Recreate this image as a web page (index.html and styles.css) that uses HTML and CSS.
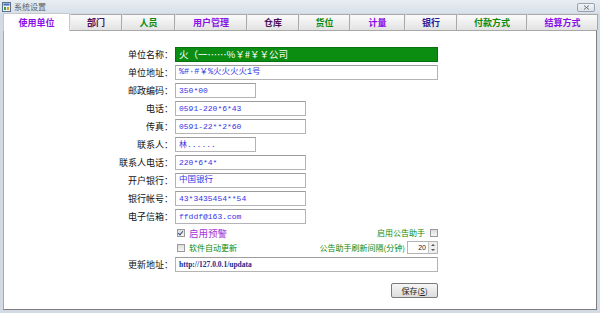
FILE: index.html
```html
<!DOCTYPE html>
<html lang="zh-CN">
<head>
    <meta charset="UTF-8">
    <title>系统设置</title>
    <link rel="stylesheet" href="styles.css">
</head>
<body>
    <div class="window">
        <div class="titlebar">
            <svg class="app-icon" width="9" height="10" viewBox="0 0 9 10">
                <rect x="0.5" y="0.5" width="8" height="9" fill="#e8eef6" stroke="#5a6f8a"></rect>
                <rect x="1.5" y="1.5" width="6" height="2" fill="#3d6fb8"></rect>
                <rect x="2" y="5" width="2" height="3" fill="#3a9a3a"></rect>
                <rect x="5" y="5" width="2" height="3" fill="#d0a030"></rect>
            </svg>
            <span class="title">系统设置</span>
            <span class="close">
                <svg width="7" height="5" viewBox="0 0 7 5">
                    <path d="M1 0.5 L6 4.5 M6 0.5 L1 4.5" stroke="#6a7280" stroke-width="1"></path>
                </svg>
            </span>
        </div>

        <div class="tabs">
            <div class="tab active purple">使用单位</div>
            <div class="tab plum">部门</div>
            <div class="tab green">人员</div>
            <div class="tab purple">用户管理</div>
            <div class="tab plum">仓库</div>
            <div class="tab green">货位</div>
            <div class="tab purple">计量</div>
            <div class="tab navy">银行</div>
            <div class="tab green">付款方式</div>
            <div class="tab purple">结算方式</div>
        </div>

        <div class="panel">
            <div class="form">
                <div class="lbl">单位名称：</div>
                <div class="field"><div class="input wide filled">火（一……%￥#￥￥公司</div></div>

                <div class="lbl">单位地址：</div>
                <div class="field"><div class="input wide cjk">%#·#￥%火火火火1号</div></div>

                <div class="lbl">邮政编码：</div>
                <div class="field"><div class="input short">350*00</div></div>

                <div class="lbl">电话：</div>
                <div class="field"><div class="input mid">0591-220*6*43</div></div>

                <div class="lbl">传真：</div>
                <div class="field"><div class="input mid">0591-22**2*60</div></div>

                <div class="lbl">联系人：</div>
                <div class="field"><div class="input short">林......</div></div>

                <div class="lbl">联系人电话：</div>
                <div class="field"><div class="input mid">220*6*4*</div></div>

                <div class="lbl">开户银行：</div>
                <div class="field"><div class="input mid cjk">中国银行</div></div>

                <div class="lbl">银行帐号：</div>
                <div class="field"><div class="input mid">43*3435454**54</div></div>

                <div class="lbl">电子信箱：</div>
                <div class="field"><div class="input mid">ffddf@163.com</div></div>

                <div class="lbl"></div>
                <div class="field check-row">
                    <label class="check warn"><span class="box checked"></span>启用预警</label>
                    <label class="check right">启用公告助手<span class="box"></span></label>
                </div>

                <div class="lbl"></div>
                <div class="field check-row tall">
                    <label class="check"><span class="box"></span>软件自动更新</label>
                    <div class="check right">公告助手刷新间隔(分钟)
                        <div class="spinner">
                            <span class="num">20</span>
                            <span class="arrows"><span class="up"></span><span class="down"></span></span>
                        </div>
                    </div>
                </div>

                <div class="lbl">更新地址：</div>
                <div class="field"><div class="input wide url">http://127.0.0.1/updata</div></div>

                <div class="lbl"></div>
                <div class="field actions"><button class="btn">保存(<u>S</u>)</button></div>
            </div>
        </div>
    </div>
</body>
</html>
```

FILE: styles.css
```css
body {
    margin: 0;
    width: 600px;
    height: 313px;
    overflow: hidden;
    background: #d3dae3;
    font-family: "Noto Sans CJK SC", "Liberation Sans", sans-serif;
}
.window {
    display: flex;
    flex-direction: column;
    height: 313px;
}
.titlebar {
    display: flex;
    align-items: center;
    height: 13px;
    padding: 0 3px 0 2px;
    background: linear-gradient(#e8edf3, #d8e0ea);
}
.app-icon {
    margin-right: 3px;
}
.title {
    font-size: 8px;
    color: #5b5f66;
    line-height: 13px;
}
.close {
    display: flex;
    align-items: center;
    justify-content: center;
    width: 16px;
    height: 7px;
    margin-left: auto;
    margin-right: 2px;
    margin-top: 2px;
    border: 1px solid #9aa3ae;
    border-radius: 2px;
    background: linear-gradient(#f2f4f7, #dde2e8);
}
.tabs {
    display: grid;
    grid-template-columns: 67px 52px 53px 72px 52px 51px 55px 52px 70px 71px;
    height: 17px;
    margin: 0 2px 0 3px;
    position: relative;
    z-index: 1;
}
.tab {
    display: flex;
    align-items: center;
    justify-content: center;
    font-size: 9px;
    font-weight: bold;
    background: linear-gradient(#fbfbfb, #e2e2e2);
    border: 1px solid #a9a9a9;
    border-left-color: #ededed;
    border-bottom: none;
    margin-top: 1px;
}
.tab.active {
    background: #fff;
    border-color: #c8c8c8;
    margin-top: 0;
    margin-bottom: -1px;
}
.purple { color: #8a10e8; }
.plum { color: #4a0f5e; }
.green { color: #0a8a0a; }
.navy { color: #2a1a9a; }
.panel {
    flex: 1;
    margin: 0 3px 3px 3px;
    background: #fff;
    border: 1px solid #a8a8a8;
    border-right-color: #7d7d7d;
    border-bottom-color: #7d7d7d;
    padding-top: 16px;
}
.form {
    display: grid;
    grid-template-columns: 169px 263px;
    column-gap: 2px;
    row-gap: 3px;
}
.lbl {
    font-size: 9px;
    line-height: 15px;
    text-align: right;
    color: #111;
}
.field {
    display: flex;
    align-items: center;
}
.input {
    box-sizing: border-box;
    height: 15px;
    padding: 0 3px;
    border: 1px solid #b4b4b4;
    border-top-color: #9c9c9c;
    background: #fff;
    color: #3434e6;
    font-family: "Liberation Mono", "Noto Sans CJK SC", monospace;
    font-size: 8px;
    line-height: 13px;
    white-space: nowrap;
}
.wide { width: 263px; }
.mid { width: 131px; }
.short { width: 81px; }
.cjk {
    font-size: 8.5px;
}
.filled {
    background: #0b8d12;
    border-color: #08700e;
    color: #fff;
    font-family: "Noto Sans CJK SC", sans-serif;
    font-size: 9.5px;
}
.url {
    font-family: "Liberation Serif", serif;
    font-weight: bold;
    font-size: 7.5px;
    color: #1b2a8c;
}
.check-row {
    justify-content: space-between;
    height: 11px;
}
.check-row.tall {
    height: 13px;
}
.check {
    display: flex;
    align-items: center;
    font-size: 8px;
    color: #0a8a0a;
}
.check.warn {
    color: #a335d8;
    font-size: 9.5px;
}
.box {
    box-sizing: border-box;
    width: 8px;
    height: 8px;
    margin: 0 4px 0 2px;
    border: 1px solid #9a9a9a;
    background: linear-gradient(#dcdcdc, #f6f6f6);
    position: relative;
}
.check.right .box {
    margin: 0 0 0 5px;
}
.box.checked::after {
    content: "";
    position: absolute;
    left: 1px;
    top: 0;
    width: 2px;
    height: 4px;
    border: solid #3a4a7a;
    border-width: 0 1px 1px 0;
    transform: rotate(40deg);
}
.spinner {
    display: flex;
    box-sizing: border-box;
    width: 31px;
    height: 13px;
    margin-left: 2px;
    border: 1px solid #b4b4b4;
    background: #fff;
}
.num {
    flex: 1;
    text-align: right;
    font-family: "Liberation Sans", sans-serif;
    font-size: 7px;
    line-height: 11px;
    color: #222;
    padding-right: 2px;
}
.arrows {
    display: flex;
    flex-direction: column;
    width: 8px;
    border-left: 1px solid #c4c4c4;
    background: #eeeeee;
}
.arrows span {
    flex: 1;
    display: flex;
    align-items: center;
    justify-content: center;
}
.up::before {
    content: "";
    border: 2px solid transparent;
    border-bottom-color: #555;
    border-top-width: 0;
}
.down::before {
    content: "";
    border: 2px solid transparent;
    border-top-color: #555;
    border-bottom-width: 0;
}
.actions {
    justify-content: flex-end;
    margin-top: 8px;
}
.btn {
    width: 47px;
    height: 15px;
    padding: 0;
    border: 1px solid #7a7a7a;
    border-radius: 2px;
    background: linear-gradient(#f6f6f6, #dcdcdc);
    font-family: "Noto Sans CJK SC", sans-serif;
    font-size: 8px;
    color: #222;
    line-height: 13px;
}
```
